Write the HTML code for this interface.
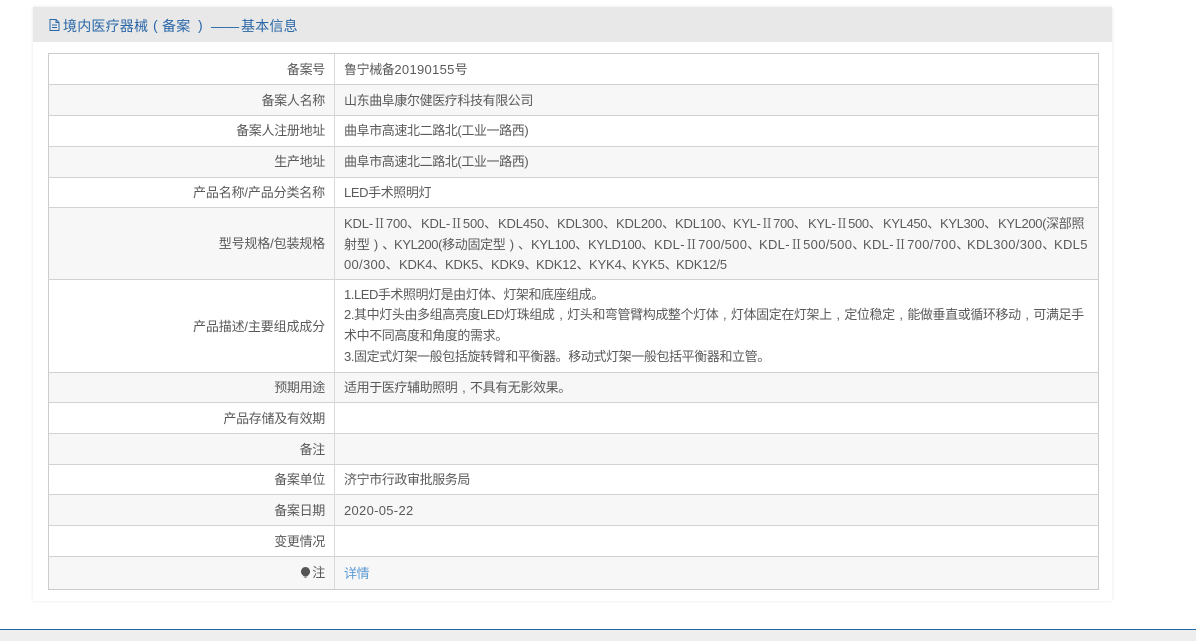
<!DOCTYPE html>
<html lang="zh-CN">
<head>
<meta charset="utf-8">
<title>境内医疗器械(备案)——基本信息</title>
<style>
html,body{margin:0;padding:0;background:#fff;}
body{position:relative;width:1196px;height:641px;overflow:hidden;font-family:"Liberation Sans","Noto Sans CJK SC",sans-serif;font-size:13px;color:#5a5a5a;}
.abs{position:absolute;}
#panel{left:33px;top:7px;width:1079px;height:594px;background:#fff;box-shadow:0 0 3px rgba(0,0,0,.1);}
#head{left:33px;top:7px;width:1079px;height:35px;background:#e8e8e8;}
.t{position:absolute;top:16px;line-height:18px;font-size:14px;color:#2a67a8;white-space:nowrap;letter-spacing:.2px;}
#tbl{left:48px;top:53px;width:1049px;height:535px;border:1px solid #ccc;box-sizing:content-box;}
.band{position:absolute;left:49px;width:1049px;background:#f7f7f7;}
.hl{position:absolute;left:48px;width:1051px;height:1px;background:#d2d2d2;}
#vl{left:334px;top:54px;width:1px;height:535px;background:#d9d9d9;}
.l{position:absolute;right:871px;white-space:nowrap;line-height:20px;letter-spacing:-.3px;}
.w{letter-spacing:-.15px;}
.v{position:absolute;left:344px;white-space:nowrap;line-height:20px;letter-spacing:-.4px;}
.n{letter-spacing:.3px;}
.s{display:inline-block;letter-spacing:-.15px;}
.k{letter-spacing:-.35px;}
.g{letter-spacing:.3px;}
.c{display:inline-block;width:12.6px;text-align:center;}
.r{font-family:"Noto Serif CJK SC",serif;}
#foot{left:0;top:629px;width:1196px;height:12px;background:#eee;border-top:1px solid #1f6aa5;box-sizing:border-box;}
a{color:#5b9bd5;text-decoration:none;}
</style>
</head>
<body>
<div class="abs" id="panel"></div>
<div class="abs" id="head"></div>
<svg class="abs" style="left:49px;top:19px" width="11" height="12" viewBox="0 0 11 12"><path d="M1 .5H7L10 3.5V11.5H1ZM7 .5V3.5H10M3 6H8M3 8.5H8" fill="none" stroke="#2a67a8" stroke-width="1"/></svg>
<div class="t" style="left:63px;top:17px">境内医疗器械</div>
<div class="t" style="left:153px;top:16px">(</div>
<div class="t" style="left:162px;top:17px">备案</div>
<div class="t" style="left:198px;top:16px">)</div>
<div class="t" style="left:211px;top:17px;letter-spacing:.1px">——</div>
<div class="t" style="left:241px;top:17px">基本信息</div>

<div class="abs" id="tbl"></div>
<div class="band" style="top:85px;height:30px"></div>
<div class="band" style="top:147px;height:30px"></div>
<div class="band" style="top:208px;height:71px"></div>
<div class="band" style="top:373px;height:29px"></div>
<div class="band" style="top:434px;height:30px"></div>
<div class="band" style="top:495px;height:30px"></div>
<div class="band" style="top:557px;height:32px"></div>

<div class="hl" style="top:84px"></div>
<div class="hl" style="top:115px"></div>
<div class="hl" style="top:146px"></div>
<div class="hl" style="top:177px"></div>
<div class="hl" style="top:207px"></div>
<div class="hl" style="top:279px"></div>
<div class="hl" style="top:372px"></div>
<div class="hl" style="top:402px"></div>
<div class="hl" style="top:433px"></div>
<div class="hl" style="top:464px"></div>
<div class="hl" style="top:494px"></div>
<div class="hl" style="top:525px"></div>
<div class="hl" style="top:556px"></div>
<div class="abs" id="vl"></div>

<div class="l" style="top:60px">备案号</div>
<div class="v" style="top:60px">鲁宁械备<span class="n">20190155</span>号</div>
<div class="l" style="top:91px">备案人名称</div>
<div class="v" style="top:91px">山东曲阜康尔健医疗科技有限公司</div>
<div class="l" style="top:121px">备案人注册地址</div>
<div class="v" style="top:121px">曲阜市高速北二路北(工业一路西)</div>
<div class="l" style="top:152px">生产地址</div>
<div class="v" style="top:152px">曲阜市高速北二路北(工业一路西)</div>
<div class="l w" style="top:183px">产品名称/产品分类名称</div>
<div class="v" style="top:183px">LED手术照明灯</div>

<div class="l w" style="top:234px">型号规格/包装规格</div>
<div class="v" style="top:213px"><span class="s" style="width:77px">KDL-<span class="r">Ⅱ</span>700、</span><span class="s" style="width:77px">KDL-<span class="r">Ⅱ</span>500、</span><span class="s" style="width:59px">KDL450、</span><span class="s" style="width:59px">KDL300、</span><span class="s" style="width:59px">KDL200、</span><span class="s" style="width:58px">KDL100、</span><span class="s k" style="width:75px">KYL-<span class="r">Ⅱ</span>700、</span><span class="s k" style="width:75px">KYL-<span class="r">Ⅱ</span>500、</span><span class="s k" style="width:57px">KYL450、</span><span class="s k" style="width:58px">KYL300、</span><span class="s k" style="width:90px">KYL200(深部照</span></div>
<div class="v" style="top:234px"><span class="s" style="width:50px">射型<span class="c">)</span>、</span><span class="s k" style="width:137px">KYL200(移动固定型<span class="c">)</span>、</span><span class="s k" style="width:57px">KYL100、</span><span class="s k" style="width:66px">KYLD100、</span><span class="s g" style="width:105px">KDL-<span class="r">Ⅱ</span>700/500、</span><span class="s g" style="width:104px">KDL-<span class="r">Ⅱ</span>500/500、</span><span class="s g" style="width:104px">KDL-<span class="r">Ⅱ</span>700/700、</span><span class="s g" style="width:87px">KDL300/300、</span><span class="s g">KDL5</span></div>
<div class="v" style="top:255px"><span class="s g" style="width:55px">00/300、</span><span class="s" style="width:46px">KDK4、</span><span class="s" style="width:46px">KDK5、</span><span class="s" style="width:45px">KDK9、</span><span class="s" style="width:53px">KDK12、</span><span class="s" style="width:43px">KYK4、</span><span class="s" style="width:44px">KYK5、</span><span class="s">KDK12/5</span></div>

<div class="l w" style="top:317px">产品描述/主要组成成分</div>
<div class="v" style="top:285px;letter-spacing:-.45px">1.LED手术照明灯是由灯体、灯架和底座组成。</div>
<div class="v" style="top:305px">2.其中灯头由多组高亮度LED灯珠组成<span class="c">,</span>灯头和弯管臂构成整个灯体<span class="c">,</span>灯体固定在灯架上<span class="c">,</span>定位稳定<span class="c">,</span>能做垂直或循环移动<span class="c">,</span>可满足手</div>
<div class="v" style="top:326px">术中不同高度和角度的需求。</div>
<div class="v" style="top:347px">3.固定式灯架一般包括旋转臂和平衡器。移动式灯架一般包括平衡器和立管。</div>

<div class="l" style="top:378px">预期用途</div>
<div class="v" style="top:378px">适用于医疗辅助照明<span class="c">,</span>不具有无影效果。</div>
<div class="l" style="top:409px">产品存储及有效期</div>
<div class="l" style="top:440px">备注</div>
<div class="l" style="top:470px">备案单位</div>
<div class="v" style="top:470px">济宁市行政审批服务局</div>
<div class="l" style="top:501px">备案日期</div>
<div class="v n" style="top:501px">2020-05-22</div>
<div class="l" style="top:532px">变更情况</div>
<svg class="abs" style="left:300px;top:566px" width="11" height="13" viewBox="0 0 11 13"><path d="M5.5 1A4.6 4.6 0 0 1 8.5 9L7 10.5H4L2.5 9A4.6 4.6 0 0 1 5.5 1Z" fill="#555"/><path d="M4.5 11.5H6.5" stroke="#777" stroke-width="1"/></svg>
<div class="l" style="top:563px">注</div>
<div class="v" style="top:564px"><a>详情</a></div>

<div class="abs" id="foot"></div>
</body>
</html>
